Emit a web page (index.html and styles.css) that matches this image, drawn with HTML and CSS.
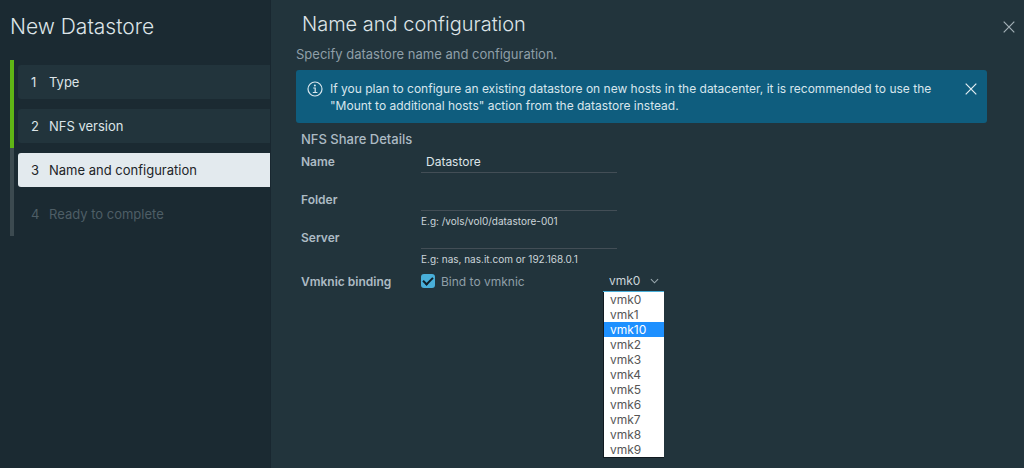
FILE: index.html
```html
<!DOCTYPE html>
<html lang="en">
<head>
<meta charset="utf-8">
<meta name="viewport" content="width=device-width, initial-scale=1">
<title>New Datastore</title>
<link rel="stylesheet" href="styles.css">
</head>
<body>
<div class="wizard">
  <aside class="sidebar">
    <h1 class="wizard-title">New Datastore</h1>
    <ol class="steps">
      <li class="step done"><button class="step-button" type="button"><span class="step-number">1</span>Type</button></li>
      <li class="step done"><button class="step-button" type="button"><span class="step-number">2</span>NFS version</button></li>
      <li class="step current"><button class="step-button" type="button" aria-current="step"><span class="step-number">3</span>Name and configuration</button></li>
      <li class="step pending"><button class="step-button" type="button" disabled><span class="step-number">4</span>Ready to complete</button></li>
    </ol>
  </aside>
  <main class="content">
    <header class="page-header">
      <h2 class="page-title">Name and configuration</h2>
      <button class="close" type="button" aria-label="Close wizard">
        <svg class="close-icon" viewBox="0 0 12 12"><path d="M.7.7l10.6 10.6M11.3.7L.7 11.3"/></svg>
      </button>
    </header>
    <p class="intro">Specify datastore name and configuration.</p>
    <div class="alert" role="status">
      <svg class="info-icon" viewBox="0 0 16 16"><circle cx="8" cy="8" r="7"/><path d="M6.2 7h2v4.4M5.8 11.5h4.6"/><circle class="dot" cx="7.9" cy="4.4" r="1"/></svg>
      <p class="alert-text">If you plan to configure an existing datastore on new hosts in the datacenter, it is recommended to use the "Mount to additional hosts" action from the datastore instead.</p>
      <button class="close alert-close" type="button" aria-label="Dismiss message">
        <svg class="close-icon" viewBox="0 0 12 12"><path d="M.7.7l10.6 10.6M11.3.7L.7 11.3"/></svg>
      </button>
    </div>
    <form class="form">
      <h3 class="section-title">NFS Share Details</h3>
      <div class="row">
        <label class="label" for="name">Name</label>
        <div class="field"><input class="input" id="name" type="text" value="Datastore"></div>
      </div>
      <div class="row">
        <label class="label" for="folder">Folder</label>
        <div class="field"><input class="input" id="folder" type="text" aria-describedby="folder-hint"><span class="hint" id="folder-hint">E.g: /vols/vol0/datastore-001</span></div>
      </div>
      <div class="row">
        <label class="label" for="server">Server</label>
        <div class="field"><input class="input" id="server" type="text" aria-describedby="server-hint"><span class="hint" id="server-hint">E.g: nas, nas.it.com or 192.168.0.1</span></div>
      </div>
      <div class="row binding">
        <span class="label">Vmknic binding</span>
        <div class="check-field">
          <input class="checkbox" id="bind" type="checkbox" checked>
          <label class="check-label" for="bind">Bind to vmknic</label>
        </div>
        <div class="picker">
          <select class="select" aria-label="Vmknic">
            <option>vmk0</option><option>vmk1</option><option>vmk10</option><option>vmk2</option><option>vmk3</option><option>vmk4</option><option>vmk5</option><option>vmk6</option><option>vmk7</option><option>vmk8</option><option>vmk9</option>
          </select>
          <svg class="caret" viewBox="0 0 10 6"><path d="M1 1l4 4 4-4"/></svg>
          <ul class="menu" role="listbox" aria-label="Vmknic options">
            <li class="option" role="option">vmk0</li>
            <li class="option" role="option">vmk1</li>
            <li class="option active" role="option" aria-selected="true">vmk10</li>
            <li class="option" role="option">vmk2</li>
            <li class="option" role="option">vmk3</li>
            <li class="option" role="option">vmk4</li>
            <li class="option" role="option">vmk5</li>
            <li class="option" role="option">vmk6</li>
            <li class="option" role="option">vmk7</li>
            <li class="option" role="option">vmk8</li>
            <li class="option" role="option">vmk9</li>
          </ul>
        </div>
      </div>
    </form>
  </main>
</div>
</body>
</html>
```
FILE: styles.css
```css
* { box-sizing: border-box; }
body, h1, h2, h3, p, ol, ul { margin: 0; padding: 0; }
ol, ul { list-style: none; }
body {
  background: #22343c;
  color: #adbbc4;
  font-family: Inter, "Open Sans", sans-serif;
  font-size: 13px;
  line-height: 17px;
}
button, input, select { font: inherit; color: inherit; }
button { border: 0; padding: 0; background: none; }

.wizard { display: flex; min-height: 100vh; }

.sidebar {
  flex: 0 0 271px;
  padding: 14px 0 0 10px;
  background: #1b2a32;
  border-right: 1px solid #192730;
}
.wizard-title {
  margin-bottom: 21px;
  color: #dde4e8;
  font-size: 21px;
  font-weight: 300;
  line-height: 25px;
}
.step {
  padding: 5px 0 5px 4px;
  border-left: 4px solid #3c4a50;
}
.step.done { border-left-color: #60b515; }
.step-button {
  display: flex;
  align-items: center;
  width: 100%;
  height: 34px;
  padding: 0 13px;
  border-radius: 3px 0 0 3px;
  background: #22343c;
  color: #dde4e8;
  text-align: left;
}
.step-number { width: 18px; }
.current .step-button { background: #e3eaee; color: #1d2428; }
.pending .step-button { background: none; color: #4e5e66; }

.content { flex: 1; min-width: 0; padding: 10px 37px 10px 25px; }
.page-header {
  display: flex;
  align-items: center;
  justify-content: space-between;
  margin: 0 -28px 8px 6px;
}
.page-title {
  color: #dde4e8;
  font-size: 20px;
  font-weight: 300;
  line-height: 28px;
}
.close { display: flex; color: #a3b0b7; }
.close-icon { width: 12px; height: 12px; fill: none; stroke: currentColor; stroke-width: 1.2; }
.page-header .close { margin-top: 6px; }
.intro { margin-bottom: 7px; color: #8f9fa8; }

.alert {
  display: flex;
  align-items: flex-start;
  gap: 7px;
  padding: 10px 10px 9px 11px;
  border-radius: 3px;
  background: #0f5d7e;
  color: #d8e6ed;
  font-size: 12px;
}
.info-icon { flex: none; width: 16px; height: 16px; margin-top: 1px; fill: none; stroke: currentColor; stroke-width: 1.2; }
.info-icon .dot { fill: currentColor; stroke: none; }
.alert-text { flex: 1; max-width: 616px; }
.alert-close { margin: 3px 0 0 auto; color: #e4eef3; }

.form { padding: 8px 0 0 5px; }
.section-title { font-size: 13px; font-weight: 500; }
.row {
  display: grid;
  grid-template-columns: 120px 196px auto;
  min-height: 38px;
}
.label { padding-top: 5px; font-size: 12px; font-weight: 600; }
.field { display: flex; flex-direction: column; }
.input {
  width: 100%;
  height: 25px;
  padding: 4px 5px 2px;
  border: 0;
  border-bottom: 1px solid #434e56;
  background: none;
  color: #dde4e8;
  font-size: 12px;
  outline: none;
}
.hint { margin-bottom: -7px; color: #ccd5da; font-size: 10px; line-height: 20px; }
.binding { margin-top: 6px; }
.check-field { display: flex; align-items: center; height: 26px; gap: 6px; }
.checkbox {
  appearance: none;
  width: 14px;
  height: 14px;
  margin: 0;
  border-radius: 3px;
  background: #49afd9;
  display: grid;
  place-items: center;
}
.checkbox:checked::before {
  content: "";
  width: 8px;
  height: 4px;
  margin-bottom: 3px;
  border: solid #10202a;
  border-width: 0 0 2px 2px;
  transform: rotate(-45deg);
}
.check-label { color: #8f9fa8; font-size: 12px; }

.picker { position: relative; width: 61px; height: 24px; margin-left: -14px; }
.select {
  display: block;
  appearance: none;
  width: 100%;
  height: 24px;
  padding: 2px 6px 0;
  border: 0;
  border-bottom: 1px solid #49afd9;
  border-radius: 0;
  background: none;
  color: #ccd5da;
  font-size: 12px;
  outline: none;
}
.caret {
  position: absolute;
  top: 10px;
  right: 5px;
  width: 9px;
  height: 6px;
  fill: none;
  stroke: #9aa8af;
  stroke-width: 1.2;
  pointer-events: none;
}
.menu {
  position: absolute;
  top: 24px;
  left: 0;
  width: 100%;
  border: 1px solid #101a20;
  border-width: 0 0 1px 1px;
  background: #fff;
  color: #565656;
  font-size: 12px;
  line-height: 15px;
}
.option { padding-left: 6px; }
.option.active { background: #1e90ff; color: #fff; }
```
